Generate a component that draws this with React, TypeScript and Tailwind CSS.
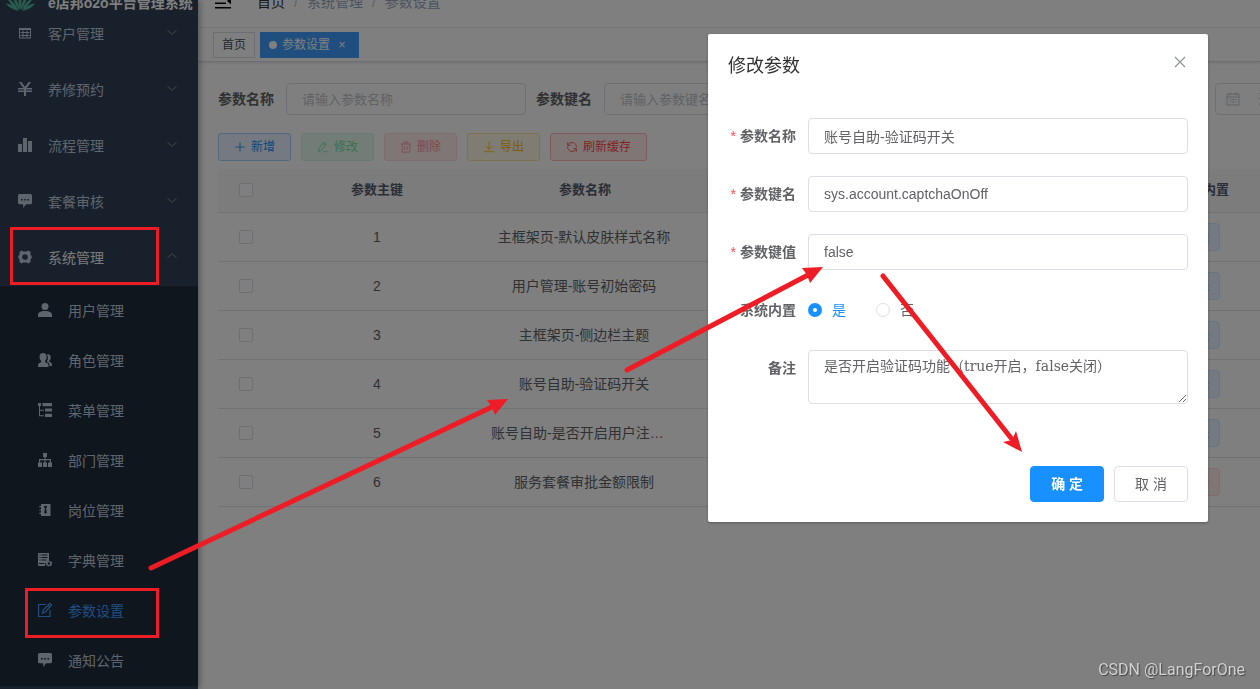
import React, { useState } from 'react';

type MenuItem = { label: string; icon: React.ReactNode };
type ConfigRow = { id: number; name: string; key: string; value: string; builtIn: boolean };

const Svg = ({ children, className = 'w-3.5 h-3.5 mb-0.5' }: { children: React.ReactNode; className?: string }) => (
  <svg viewBox="0 0 14 14" className={`${className} shrink-0`} fill="currentColor" aria-hidden="true">{children}</svg>
);

const MessageIcon = (
  <Svg>
    <path fillRule="evenodd" d="M1.5 0h11A1.5 1.5 0 0 1 14 1.5v7.3a1.5 1.5 0 0 1-1.5 1.500H8.200L5.200 14v-3.700H1.500A1.500 1.500 0 0 1 0 8.800V1.500A1.500 1.500 0 0 1 1.500 0zM3 5v1.500h1.700V5zM6.200 5v1.500h1.700V5zM9.400 5v1.500h1.700V5z" />
  </Svg>
);

// Top level menus
const MENUS: MenuItem[] = [
  {
    label: '客户管理',
    icon: (
      <Svg>
        <path fillRule="evenodd" d="M1 1h12v11.500H1zM2 4v7.500h10V4z" />
        <path d="M4.500 4.500h1v7h-1zM8.500 4.500h1v7h-1zM2.500 6h9v1h-9zM2.500 9h9v1h-9z" />
      </Svg>
    ),
  },
  {
    label: '养修预约',
    icon: (
      <Svg>
        <path d="M1 0h2.400L7 4.800 10.600 0H13L9 5.800H5zM0 6h14v1.500H0zM0 8.500h14V10H0zM6 5h2v9H6z" />
      </Svg>
    ),
  },
  { label: '流程管理', icon: <Svg><path d="M0 6h4v8H0zM5 0h4v14H5zM10 3h4v11h-4z" /></Svg> },
  { label: '套餐审核', icon: MessageIcon },
];

// Children of 系统管理
const SUB_MENUS: MenuItem[] = [
  { label: '用户管理', icon: <Svg><circle cx="7" cy="3.600" r="3.500" /><path d="M0 14v-2c0-2.600 3-4 7-4s7 1.400 7 4v2z" /></Svg> },
  {
    label: '角色管理',
    icon: (
      <Svg>
        <path d="M5 0c2.300 0 3.700 1.600 3.700 4 0 1.700-.7 3.200-1.700 4v1l2.500 1.200c.8.500 1 1.500 1 3.800H0c0-2.300.2-3.300 1-3.800L3.300 9V8C2.200 7.200 1.500 5.700 1.500 4 1.500 1.600 2.800 0 5 0z" />
        <path d="M9 1.500c2.200-.6 3.700.8 3.700 3 0 1.500-.6 2.700-1.500 3.400v.8l1.800 1.100c.8.500 1 1.400 1 3.200h-2.500c0-2-.5-3-1.500-3.600L9 8.700V8c1-1.300 1.500-4 0-6.500z" />
      </Svg>
    ),
  },
  { label: '菜单管理', icon: <Svg><path d="M0 0h3v3H2v3.700h4v1H2v4.600h4v1H1V3H0zM4.500 0H14v3.200H4.500zM7 5.400h7v3.200H7zM7 10.800h7V14H7z" /></Svg> },
  { label: '部门管理', icon: <Svg><path d="M5 0h4v4H7.600v2H13v3.500h1V14h-4V9.500h1.800V7.200H7.600v2.300H9V14H5V9.500h1.400V7.200H2.200v2.300H4V14H0V9.500h1V6h5.400V4H5z" /></Svg> },
  {
    label: '岗位管理',
    icon: (
      <Svg>
        <path fillRule="evenodd" d="M3 1h9.500v12H3v-2H1.300V9.800H3V7.600H1.300V6.400H3V4.200H1.300V3H3zM6 3v1.500l1 .5-.8 4.500L7.500 11l1.300-1.500L8 5l1-.5V3z" />
        <path d="M4 3h1v8H4z" />
      </Svg>
    ),
  },
  {
    label: '字典管理',
    icon: (
      <Svg>
        <path fillRule="evenodd" d="M0 0h11v7.500L7.500 10l-.5 3H1.500A1.500 1.500 0 0 1 0 11.500zM1.500 1.500v1h1v-1zM3.500 1.500v1h6v-1zM1.500 4v1h1V4zM3.500 4v1h6V4zM1.500 6.500v1h1v-1zM3.500 6.500v1h5v-1zM1 10v1h5.500v-1z" />
        <path fillRule="evenodd" d="M11 7.500l1 .9h1.500l.5 2-.5 2.200-1.300.2-1.200.7-1.200-.7-1.300-.2-.5-2.200.5-2H10zM11 9.300a1.300 1.300 0 1 0 0 2.600 1.300 1.300 0 0 0 0-2.600z" />
      </Svg>
    ),
  },
  {
    label: '参数设置',
    icon: (
      <Svg>
        <path d="M8 1.500H.5v12h11.500V7M4.500 10l.7-3 6.200-6.200c.4-.4.9-.4 1.300 0l.4.4c.4.400.4.900 0 1.300L7.300 9zM10 2.200l1.900 1.900" fill="none" stroke="currentColor" strokeWidth="1.200" />
      </Svg>
    ),
  },
  { label: '通知公告', icon: MessageIcon },
];

const ROWS: ConfigRow[] = [
  { id: 1, name: '主框架页-默认皮肤样式名称', key: 'sys.index.skinName', value: 'skin-blue', builtIn: true },
  { id: 2, name: '用户管理-账号初始密码', key: 'sys.user.initPassword', value: '123456', builtIn: true },
  { id: 3, name: '主框架页-侧边栏主题', key: 'sys.index.sideTheme', value: 'theme-dark', builtIn: true },
  { id: 4, name: '账号自助-验证码开关', key: 'sys.account.captchaOnOff', value: 'false', builtIn: true },
  { id: 5, name: '账号自助-是否开启用户注册功能', key: 'sys.account.registerUser', value: 'false', builtIn: true },
  { id: 6, name: '服务套餐审批金额限制', key: 'package.audit.limit', value: '1000', builtIn: false },
];

const line = { fill: 'none', stroke: 'currentColor', strokeWidth: 1 };

const ACTIONS = [
  { label: '新增', cls: 'bg-[#e8f4ff] border-[#a3d3ff] text-[#1890ff]', icon: <path d="M7 1.500v11M1.500 7h11" {...line} /> },
  { label: '修改', cls: 'bg-[#e7faf0] border-[#d0f5e0] text-[#71e2a3]', icon: <path d="M2 12.500l.5-4L7.500 1.500l3 2-5 7zM6.500 3l3 2M7 12.500h5.500" {...line} /> },
  { label: '删除', cls: 'bg-[#ffeded] border-[#ffdbdb] text-[#ff9292]', icon: <path d="M1 3.500h12M2.500 3.500v9.500h9V3.500M5 3.500V1h4v2.500M5.500 6v4.500M8.500 6v4.500" {...line} /> },
  { label: '导出', cls: 'bg-[#fff8e6] border-[#ffe399] text-[#ffba00]', icon: <path d="M7 1v8.500M3 6l4 4 4-4M1 12.500h12" {...line} /> },
  { label: '刷新缓存', cls: 'bg-[#ffeded] border-[#ffb6b6] text-[#ff4949]', icon: <path d="M2 1.500v3.500h3.500M2 4.500C4 1 10 .5 12 5.500v2M12 12.500V9H8.500M12 9.500C10 13 4 13.500 2 8.500v-2" {...line} /> },
];

const Chevron = ({ up = false }: { up?: boolean }) => (
  <svg viewBox="0 0 12 12" className="w-3 h-3 mb-1 ml-auto text-[#909399]" fill="none" stroke="currentColor" aria-hidden="true">
    <path d={up ? 'M1.500 8L6 3.500 10.500 8' : 'M1.500 4L6 8.500 10.500 4'} />
  </svg>
);

const Sidebar = () => (
  <aside className="w-[198px] shrink-0 flex flex-col overflow-hidden bg-[#304156] text-[#bfcbd9] text-sm shadow-[2px_0_6px_rgba(0,21,41,0.35)] z-10">
    <div className="h-7 shrink-0 flex items-end">
      <a href="#home" className="h-[50px] flex items-center gap-3 pl-1 font-bold text-white whitespace-nowrap">
        <svg viewBox="0 0 32 32" className="w-8 h-8 shrink-0" fill="#52b898" aria-hidden="true">
          <path d="M16 23C14 17 14 9 16 3c2 6 2 14 0 20zM15.500 23C11 18 9 12 8 7c4 4 7 10 7.500 16zM16.500 23c4.500-5 6.500-11 7.500-16-4 4-7 10-7.500 16zM14.500 23C9 20 5 15 3 11c5 2 9 7 11.500 12zM17.500 23c5.500-3 9.500-8 11.500-12-5 2-9 7-11.500 12zM15 24C10 23 5 21 2 16.500c5 .5 10 3.500 13 7.500zM18 24c5-1 10-3 13-7.500-5 .5-10 3.500-13 7.500z" />
        </svg>
        e店邦o2o平台管理系统
      </a>
    </div>
    <nav className="flex-1 overflow-hidden">
      <ul className="-mt-[22px]">
        {MENUS.map(item => (
          <li key={item.label}>
            <a href="#menu" className="h-14 flex items-center gap-4 pl-[18px] pr-5">
              {item.icon}
              {item.label}
              <Chevron />
            </a>
          </li>
        ))}
        <li>
          <a href="#system" className="h-14 flex items-center gap-4 pl-[18px] pr-5 text-[#f4f4f5]">
            <Svg className="w-3.5 h-3.5 mb-0.5 text-[#bfcbd9]">
              <path fillRule="evenodd" d="M3.500 .5l2 1h3l2-1 2 1.500v2.500L14 7l-1.500 2.500V12l-2 1.500-2-1h-3l-2 1-2-1.500V9.500L0 7l1.500-2.500V2zM7 4.200a2.800 2.800 0 1 0 0 5.600 2.800 2.800 0 0 0 0-5.600z" />
            </Svg>
            系统管理
            <Chevron up />
          </a>
          <ul className="bg-[#1f2d3d]">
            {SUB_MENUS.map(item => (
              <li key={item.label}>
                <a href="#sub" className={`h-[50px] flex items-center gap-4 pl-[38px] ${item.label === '参数设置' ? 'text-[#409eff]' : ''}`}>
                  {item.icon}
                  {item.label}
                </a>
              </li>
            ))}
          </ul>
        </li>
      </ul>
    </nav>
  </aside>
);

const Topbar = () => (
  <header className="shrink-0">
    <div className="h-7 flex items-end overflow-hidden border-b border-[#f0f1f4]">
      <div className="h-[50px] shrink-0 flex items-center px-[15px] gap-6 text-sm">
        <svg viewBox="0 0 20 20" className="w-5 h-5" aria-label="折叠菜单">
          <path d="M2 2h16v1.500H2zM2 6.500h11V8H2zM2 10.500h11V12H2zM2 15h16v1.500H2zM18 5.500v7L14 9z" />
        </svg>
        <nav className="flex gap-[9px] text-[#97a8be]">
          <a href="#home" className="text-[#303133]">首页</a>
          <span className="text-[#c0c4cc]">/</span>
          <span>系统管理</span>
          <span className="text-[#c0c4cc]">/</span>
          <span>参数设置</span>
        </nav>
      </div>
    </div>
    <div className="h-[34px] flex items-start gap-[5px] pt-1 px-[15px] text-xs border-b border-[#d8dce5] shadow-[0_1px_3px_rgba(0,0,0,0.12)]">
      <a href="#home" className="h-[26px] flex items-center px-2 border border-[#d8dce5] text-[#495060]">首页</a>
      <a href="#config" className="h-[26px] flex items-center px-2 border border-[#409eff] bg-[#409eff] text-white">
        <span className="w-2 h-2 mr-[5px] rounded-full bg-white" />
        参数设置
        <span className="w-4 ml-1 text-center">×</span>
      </a>
    </div>
  </header>
);

const fieldCls = 'h-8 px-[15px] border border-[#dcdfe6] rounded text-[13px] placeholder:text-[#c0c4cc]';

const SearchForm = () => (
  <form className="flex gap-[10px] text-sm font-bold text-[#606266] whitespace-nowrap">
    <div className="shrink-0 flex items-center gap-3">
      <label htmlFor="q-name">参数名称</label>
      <input id="q-name" placeholder="请输入参数名称" className={`${fieldCls} w-60 font-normal`} />
    </div>
    <div className="shrink-0 flex items-center gap-3">
      <label htmlFor="q-key">参数键名</label>
      <input id="q-key" placeholder="请输入参数键名" className={`${fieldCls} w-60 font-normal`} />
    </div>
    <div className="shrink-0 flex items-center gap-3">
      <label htmlFor="q-type">系统内置</label>
      <select id="q-type" className={`${fieldCls} w-[215px] font-normal text-[#c0c4cc]`}>
        <option>系统内置</option>
      </select>
    </div>
    <div className="shrink-0 flex items-center gap-3">
      <label htmlFor="q-date">创建时间</label>
      <div className="h-8 w-60 flex items-center px-[10px] border border-[#dcdfe6] rounded font-normal">
        <Svg className="w-3.5 h-3.5 text-[#c0c4cc]">
          <path d="M1 2h12v11H1zM1 5h12M4 .5v3M10 .5v3M3.500 7.500h2M6 7.500h2M8.500 7.500h2M3.500 10h2M6 10h2M8.500 10h2" {...line} />
        </Svg>
        <input id="q-date" placeholder="开始日期" className="w-22 text-[13px] text-center placeholder:text-[#c0c4cc]" />
      </div>
    </div>
  </form>
);

const boxCls = 'appearance-none block mx-auto w-3.5 h-3.5 border border-[#dcdfe6] rounded-xs bg-white';

const ConfigTable = () => (
  <table className="mt-2 table-fixed w-[1280px] text-sm text-[#606266] text-center">
    <colgroup>
      <col className="w-[55px]" />
      <col className="w-[208px]" />
      <col className="w-[208px]" />
      <col className="w-[205px]" />
      <col className="w-[205px]" />
      <col className="w-[208px]" />
      <col />
    </colgroup>
    <thead>
      <tr className="h-[43px] bg-[#f8f8f9] border-b border-[#dfe6ec] text-[13px] text-[#515a6e]">
        <th><input type="checkbox" aria-label="全选" className={boxCls} /></th>
        <th>参数主键</th>
        <th>参数名称</th>
        <th>参数键名</th>
        <th>参数键值</th>
        <th>系统内置</th>
        <th>备注</th>
      </tr>
    </thead>
    <tbody>
      {ROWS.map(row => (
        <tr key={row.id} className="h-[49px] border-b border-[#dfe6ec]">
          <td><input type="checkbox" aria-label={row.name} className={boxCls} /></td>
          <td>{row.id}</td>
          <td className="pl-[10px] pr-3 truncate">{row.name}</td>
          <td className="px-[10px] truncate">{row.key}</td>
          <td className="px-[10px] truncate">{row.value}</td>
          <td>
            <span className={`inline-block align-middle h-7 px-[10px] leading-[26px] text-xs border rounded ${row.builtIn ? 'bg-[#e8f4ff] border-[#d1e9ff] text-[#1890ff]' : 'bg-[#ffeded] border-[#ffdbdb] text-[#ff4949]'}`}>
              {row.builtIn ? '是' : '否'}
            </span>
          </td>
          <td />
        </tr>
      ))}
    </tbody>
  </table>
);

const inputCls = 'flex-1 min-w-0 h-9 px-[15px] border border-[#dcdfe6] rounded text-[#606266]';
const labelCls = 'w-20 pr-3 shrink-0 text-right font-bold';
const radioCls = 'appearance-none w-3.5 h-3.5 rounded-full border border-[#dcdfe6] checked:border-[5px] checked:border-[#1890ff]';

const EditDialog = () => {
  const [form, setForm] = useState({
    name: '账号自助-验证码开关',
    key: 'sys.account.captchaOnOff',
    value: 'false',
    builtIn: 'Y',
    remark: '是否开启验证码功能（true开启，false关闭）',
  });

  const fields = [
    { id: 'name', label: '参数名称' },
    { id: 'key', label: '参数键名' },
    { id: 'value', label: '参数键值' },
  ] as { id: 'name' | 'key' | 'value'; label: string }[];

  return (
    <div className="fixed inset-0 z-20 bg-black/50 flex items-start justify-end pt-[34px] pr-[52px]">
      <div role="dialog" aria-labelledby="dialog-title" className="w-[500px] bg-white rounded-xs shadow-[0_1px_3px_rgba(0,0,0,0.3)] text-sm text-[#606266]">
        <div className="flex items-start justify-between px-5 pt-5 pb-[10px]">
          <h2 id="dialog-title" className="text-lg leading-6 text-[#303133]">修改参数</h2>
          <button type="button" aria-label="关闭" className="text-[#909399]">
            <svg viewBox="0 0 16 16" className="w-4 h-4" fill="none" stroke="currentColor" strokeWidth="1.200" aria-hidden="true">
              <path d="M3 3l10 10M13 3L3 13" />
            </svg>
          </button>
        </div>
        <form className="flex flex-col gap-[22px] px-5 pt-[30px] pb-[52px]">
          {fields.map(f => (
            <div key={f.id} className="flex items-center">
              <label htmlFor={f.id} className={labelCls}>
                <span className="mr-1 text-[#ff4949] font-normal">*</span>{f.label}
              </label>
              <input id={f.id} value={form[f.id]} onChange={e => setForm({ ...form, [f.id]: e.target.value })} className={inputCls} />
            </div>
          ))}
          <div role="radiogroup" aria-labelledby="built-in" className="h-9 flex items-center">
            <span id="built-in" className={labelCls}>系统内置</span>
            <div className="flex gap-[30px]">
              {[['Y', '是'], ['N', '否']].map(([v, text]) => (
                <label key={v} className={`flex items-center gap-[10px] ${form.builtIn === v ? 'text-[#1890ff]' : ''}`}>
                  <input type="radio" name="builtIn" checked={form.builtIn === v} onChange={() => setForm({ ...form, builtIn: v })} className={radioCls} />
                  {text}
                </label>
              ))}
            </div>
          </div>
          <div className="flex items-start">
            <label htmlFor="remark" className={`${labelCls} leading-9`}>备注</label>
            <textarea
              id="remark"
              value={form.remark}
              onChange={e => setForm({ ...form, remark: e.target.value })}
              className="flex-1 h-[54px] px-[15px] py-[5px] leading-[21px] border border-[#dcdfe6] rounded resize-y font-['DejaVu_Serif','Noto_Sans_CJK_SC',serif]"
            />
          </div>
        </form>
        <div className="flex justify-end gap-[10px] px-5 pt-[10px] pb-5">
          <button type="button" className="h-9 px-5 border border-[#1890ff] rounded bg-[#1890ff] text-white font-bold">确 定</button>
          <button type="button" className="h-9 px-5 border border-[#dcdfe6] rounded">取 消</button>
        </div>
      </div>
    </div>
  );
};

// Red boxes and arrows that walk the reader through the steps
const Guide = () => (
  <div className="absolute inset-0 z-30 pointer-events-none">
    <div className="absolute left-[10px] top-[227px] w-[149px] h-[58px] border-3 border-[#ee1c24]" />
    <div className="absolute left-[25px] top-[588px] w-[134px] h-[50px] border-3 border-[#ee1c24]" />
    <svg className="absolute left-0 top-0 w-[1260px] h-[689px]" viewBox="0 0 1260 689" fill="#ee1c24" stroke="#ee1c24" aria-hidden="true">
      <path d="M151 568L494 406M627 370L808 275M883 276L1011 438" fill="none" strokeWidth="5" strokeLinecap="round" />
      <path stroke="none" d="M508 399L487 400 492 407 495 415zM823 267L802 268 807 275 810 283zM1022 452L1003 442 1012 440 1016 431z" />
    </svg>
    <p className="absolute right-[15px] bottom-[7px] text-base leading-6 text-[#d2d2d2] font-['Roboto',sans-serif] [text-shadow:1px_1px_1px_#444]">CSDN @LangForOne</p>
  </div>
);

const App: React.FC = () => (
  <div className="relative h-screen flex overflow-hidden bg-white font-['Liberation_Sans','Noto_Sans_CJK_SC',sans-serif]">
    <Sidebar />
    <div className="flex-1 min-w-0 flex flex-col">
      <Topbar />
      <main className="flex-1 overflow-hidden px-5 pt-[21px]">
        <SearchForm />
        <div className="mt-[18px] flex gap-[10px]">
          {ACTIONS.map(a => (
            <button key={a.label} type="button" className={`h-7 px-[15px] flex items-center gap-[5px] border rounded-[3px] text-xs ${a.cls}`}>
              <Svg className="w-3 h-3">{a.icon}</Svg>
              {a.label}
            </button>
          ))}
        </div>
        <ConfigTable />
      </main>
    </div>
    <EditDialog />
    <Guide />
  </div>
);

export default App;
